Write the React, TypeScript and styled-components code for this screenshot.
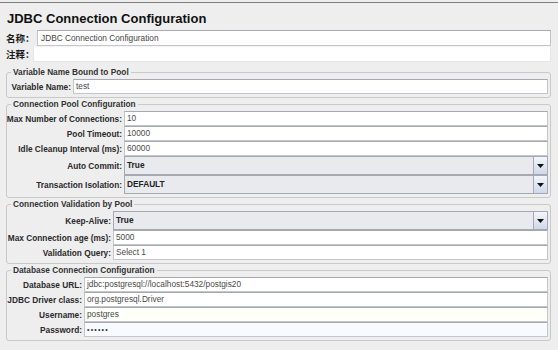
import React from "react";
import styled, { createGlobalStyle } from "styled-components";

const Global = createGlobalStyle`
  html, body { margin: 0; padding: 0; background: #eeeeee; }
  body { font-family: "Liberation Sans", Arial, "Noto Sans CJK SC", sans-serif; }
`;

const Page = styled.div`
  width: 558px;
  height: 350px;
  box-sizing: border-box;
  padding-top: 2px;
  background: #eeeeee;
  overflow: hidden;
`;

const Panel = styled.div`
  border-top: 1px solid #7f7f7f;
  padding: 0 7px 0 6px;
  display: flex;
  flex-direction: column;
`;

const Title = styled.div`
  font-size: 13px;
  font-weight: bold;
  line-height: 16px;
  color: #111;
  padding: 8px 0 3px 1px;
`;

const TopRow = styled.div`
  display: flex;
  align-items: center;
  height: 16px;
`;

const TopLabel = styled.div<{ $width: number }>`
  width: ${(p) => p.$width}px;
  flex: none;
  font-family: "Noto Sans CJK SC", "Liberation Sans", sans-serif;
  font-size: 9.5px;
  font-weight: bold;
  line-height: 12px;
  color: #1a1a1a;
  white-space: nowrap;
`;

const TopField = styled.div<{ $plain?: boolean }>`
  flex: 1;
  height: 16px;
  box-sizing: border-box;
  background: #fff;
  border: 1px solid ${(p) => (p.$plain ? "#e6e6e6" : "#c3c5cb")};
  border-top-color: ${(p) => (p.$plain ? "#f4f4f4" : "#a9acb3")};
  padding: 0 3px;
  font-size: 8.3px;
  line-height: 14px;
  color: #444;
  white-space: nowrap;
`;

const Groups = styled.div`
  margin-top: 5px;
  display: flex;
  flex-direction: column;
  gap: 1px;
`;

const Group = styled.fieldset`
  margin: 0;
  padding: 2px 2px 3px 1px;
  border: 1px solid #c9c9c9;
  border-radius: 3px;
  min-width: 0;
`;

const Legend = styled.legend`
  margin-left: 3px;
  padding: 0 2px;
  font-size: 8.3px;
  font-weight: bold;
  line-height: 10px;
  color: #333;
`;

const Grid = styled.div<{ $label: number }>`
  display: grid;
  grid-template-columns: ${(p) => p.$label}px 1fr;
  column-gap: 2px;
  align-items: center;
`;

const Label = styled.div`
  display: flex;
  justify-content: flex-end;
  font-size: 8.3px;
  font-weight: bold;
  color: #2a2a2a;
  white-space: nowrap;
`;

const Field = styled.div<{ $tint?: string }>`
  height: 15px;
  box-sizing: border-box;
  background: ${(p) => p.$tint || "#fff"};
  border: 1px solid #c4c6cc;
  border-top-color: #a6a9b1;
  padding: 0 2px;
  font-size: 8.3px;
  line-height: 13px;
  color: #4a4a4a;
  white-space: nowrap;
  overflow: hidden;
`;

const Dots = styled.span`
  font-size: 7px;
  letter-spacing: 1.2px;
  color: #333;
`;

const Select = styled.div`
  height: 19px;
  box-sizing: border-box;
  display: flex;
  background: #e9eaed;
  border: 1px solid #a6a9b1;
`;

const SelectValue = styled.div`
  flex: 1;
  padding: 0 2px;
  font-size: 8.3px;
  font-weight: bold;
  line-height: 17px;
  color: #222;
`;

const Arrow = styled.div`
  width: 13px;
  border-left: 1px solid #a6a9b1;
  background: linear-gradient(#f3f6fb, #cfd8ea);
  display: flex;
  align-items: center;
  justify-content: center;
`;

type Row =
  | { label: string; kind: "text"; value: string; tint?: string }
  | { label: string; kind: "password"; tint?: string }
  | { label: string; kind: "select"; value: string };

const RowView = ({ row }: { row: Row }) => (
  <>
    <Label>{row.label}</Label>
    {row.kind === "select" ? (
      <Select>
        <SelectValue>{row.value}</SelectValue>
        <Arrow>
          <svg width="7" height="4" viewBox="0 0 7 4">
            <path d="M0 0h7L3.5 4z" fill="#111" />
          </svg>
        </Arrow>
      </Select>
    ) : row.kind === "password" ? (
      <Field $tint={row.tint}>
        <Dots>••••••</Dots>
      </Field>
    ) : (
      <Field $tint={row.tint}>{row.value}</Field>
    )}
  </>
);

const groups: { title: string; label: number; rows: Row[] }[] = [
  {
    title: "Variable Name Bound to Pool",
    label: 63,
    rows: [{ label: "Variable Name:", kind: "text", value: "test" }],
  },
  {
    title: "Connection Pool Configuration",
    label: 114,
    rows: [
      { label: "Max Number of Connections:", kind: "text", value: "10" },
      { label: "Pool Timeout:", kind: "text", value: "10000" },
      { label: "Idle Cleanup Interval (ms):", kind: "text", value: "60000" },
      { label: "Auto Commit:", kind: "select", value: "True" },
      { label: "Transaction Isolation:", kind: "select", value: "DEFAULT" },
    ],
  },
  {
    title: "Connection Validation by Pool",
    label: 103,
    rows: [
      { label: "Keep-Alive:", kind: "select", value: "True" },
      { label: "Max Connection age (ms):", kind: "text", value: "5000" },
      { label: "Validation Query:", kind: "text", value: "Select 1" },
    ],
  },
  {
    title: "Database Connection Configuration",
    label: 74,
    rows: [
      { label: "Database URL:", kind: "text", value: "jdbc:postgresql://localhost:5432/postgis20" },
      { label: "JDBC Driver class:", kind: "text", value: "org.postgresql.Driver" },
      { label: "Username:", kind: "text", value: "postgres", tint: "#fffff9" },
      { label: "Password:", kind: "password", tint: "#f7fbff" },
    ],
  },
];

export default function App() {
  return (
    <Page>
      <Global />
      <Panel>
        <Title>JDBC Connection Configuration</Title>
        <TopRow>
          <TopLabel $width={31}>名称：</TopLabel>
          <TopField>JDBC Connection Configuration</TopField>
        </TopRow>
        <TopRow>
          <TopLabel $width={27}>注释：</TopLabel>
          <TopField $plain />
        </TopRow>
        <Groups>
          {groups.map((g) => (
            <Group key={g.title}>
              <Legend>{g.title}</Legend>
              <Grid $label={g.label}>
                {g.rows.map((r) => (
                  <RowView key={r.label} row={r} />
                ))}
              </Grid>
            </Group>
          ))}
        </Groups>
      </Panel>
    </Page>
  );
}
